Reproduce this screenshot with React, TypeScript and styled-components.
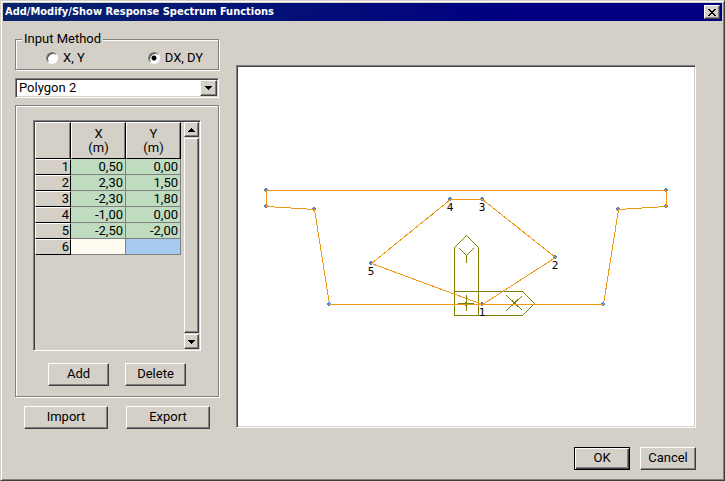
import React, { useState } from "react";
import styled, { createGlobalStyle, css } from "styled-components";

const face = "#d4d0c8";
const ui = `Roboto, "Liberation Sans", sans-serif`;

const GlobalStyle = createGlobalStyle`
  *, *::before, *::after { box-sizing: border-box; }
  body { margin: 0; background: ${face}; }
`;

const raised = css`
  border: 1px solid;
  border-color: #fff #404040 #404040 #fff;
  box-shadow: inset -1px -1px 0 #808080;
`;
const sunken = css`
  border: 1px solid;
  border-color: #808080 #fff #fff #808080;
`;
const etched = css`
  border: 1px solid #808080;
  box-shadow: inset 1px 1px 0 #fff, 1px 1px 0 #fff;
`;

const Dialog = styled.main`
  display: flex;
  flex-direction: column;
  min-height: 100vh;
  padding: 1px;
  background: ${face};
  border: 1px solid;
  border-color: ${face} #404040 #404040 ${face};
  box-shadow: inset 1px 1px 0 #fff, inset -1px -1px 0 #808080;
  font: 13px/16px ${ui};
  color: #000;
`;
const TitleBar = styled.header`
  display: flex;
  align-items: center;
  justify-content: space-between;
  height: 18px;
  margin: 1px;
  padding: 0 2px;
  background: linear-gradient(90deg, #08246b, #000080 70%);
`;
const Title = styled.h1`
  margin: 0;
  color: #fff;
  font: bold 11px/16px "DejaVu Sans Condensed", "DejaVu Sans", sans-serif;
`;
const CloseButton = styled.button`
  display: grid;
  place-items: center;
  width: 16px;
  height: 14px;
  padding: 0;
  background: ${face};
  ${raised}
`;
const Body = styled.div`
  display: flex;
  align-items: flex-start;
  gap: 17px;
  padding: 9px 27px 0 13px;
`;
const Side = styled.section`
  flex: none;
  width: 204px;
`;
const MethodGroup = styled.fieldset`
  position: relative;
  display: flex;
  gap: 63px;
  height: 39px;
  margin: 0 0 8px;
  padding: 19px 0 0 31px;
  border: 0;
  &::before {
    content: "";
    position: absolute;
    inset: 8px 0 0;
    ${etched}
  }
`;
const Legend = styled.legend`
  position: absolute;
  top: 0;
  left: 7px;
  padding: 0 2px;
  background: ${face};
`;
const RadioLabel = styled.label`
  position: relative;
  display: flex;
  align-items: center;
  gap: 5px;
  height: 16px;
`;
const Radio = styled.input`
  appearance: none;
  width: 12px;
  height: 12px;
  margin: 0;
  border: 1px solid;
  border-color: #808080 #fff #fff #808080;
  border-radius: 50%;
  background: #fff;
  box-shadow: inset 1px 1px 0 #404040;
  &:checked {
    background: radial-gradient(circle, #000 0 2px, #fff 3px);
  }
`;
const Combo = styled.div`
  display: grid;
  grid-template-columns: 1fr 17px;
  height: 20px;
  margin-bottom: 7px;
  padding: 1px;
  background: #fff;
  ${sunken}
  box-shadow: inset 1px 1px 0 #404040, inset -1px -1px 0 ${face};
`;
const Select = styled.select`
  grid-area: 1 / 1 / 2 / 3;
  appearance: none;
  width: 100%;
  padding: 0 20px 0 2px;
  border: 0;
  background: transparent;
  color: #000;
  font: 13px/16px ${ui};
`;
const ComboArrow = styled.span`
  grid-area: 1 / 2;
  display: grid;
  place-items: center;
  background: ${face};
  pointer-events: none;
  ${raised}
`;
const Panel = styled.div`
  height: 292px;
  margin: 0 0 9px;
  padding: 14px 17px 0;
  ${etched}
`;
const GridBox = styled.div`
  display: flex;
  justify-content: space-between;
  height: 231px;
  padding: 1px;
  ${sunken}
  box-shadow: inset 1px 1px 0 #404040;
`;
const Table = styled.table`
  align-self: flex-start;
  width: 146px;
  table-layout: fixed;
  border-collapse: separate;
  border-spacing: 0;
`;
const HeadCell = styled.th<{ $w: number }>`
  width: ${(p) => p.$w}px;
  height: 37px;
  padding: 1px 0 0;
  border: 1px solid;
  border-color: #fff #000 #000 #fff;
  box-shadow: inset -1px 0 0 #808080;
  font: 13px/14px ${ui};
`;
const RowHead = styled.th`
  height: 16px;
  padding: 0 1px 0 0;
  border: 1px solid;
  border-color: #fff #000 #000 #fff;
  font: 13px/14px ${ui};
  text-align: right;
`;
const Cell = styled.td<{ $tone: string }>`
  height: 16px;
  padding: 0 2px 0 0;
  border: 0 solid #808080;
  border-width: 0 1px 1px 0;
  background: ${(p) => p.$tone};
  font: 13px/15px ${ui};
  text-align: right;
`;
const ScrollBar = styled.div`
  display: grid;
  grid-template-rows: 15px 1fr 15px;
  gap: 1px;
  width: 15px;
`;
const ScrollButton = styled.button`
  display: grid;
  place-items: center;
  padding: 0;
  background: ${face};
  ${raised}
`;
const Thumb = styled.div`
  ${raised}
`;
const ButtonRow = styled.div<{ $gap: number; $top?: number }>`
  display: flex;
  justify-content: center;
  gap: ${(p) => p.$gap}px;
  margin-top: ${(p) => p.$top ?? 0}px;
`;
const Button = styled.button<{ $w: number; $default?: boolean }>`
  width: ${(p) => p.$w}px;
  height: 23px;
  padding: 0 0 2px;
  background: ${face};
  color: #000;
  font: 13px/16px ${ui};
  ${raised}
  ${(p) =>
    p.$default &&
    css`
      border-color: #000;
      box-shadow: inset 1px 1px 0 #fff, inset -1px -1px 0 #404040, inset -2px -2px 0 #808080;
    `}
`;
const Canvas = styled.section`
  flex: 1;
  min-width: 0;
  margin-top: 34px;
  padding: 1px;
  background: #fff;
  ${sunken}
  box-shadow: inset 1px 1px 0 #404040, inset -1px -1px 0 ${face};
  svg { display: block; width: 100%; height: auto; }
  text { font: 11px "DejaVu Sans Mono", monospace; }
`;
const Footer = styled.footer`
  display: flex;
  justify-content: flex-end;
  gap: 10px;
  padding: 18px 27px 0 0;
`;

const rows = [
  ["0,50", "0,00"],
  ["2,30", "1,50"],
  ["-2,30", "1,80"],
  ["-1,00", "0,00"],
  ["-2,50", "-2,00"],
];

const outline = [[266, 190], [666, 190], [666, 206], [618, 209], [603, 304], [329, 304], [314, 209], [266, 206]];
const polygon = [[482, 304], [555, 257], [482, 199], [450, 199], [371, 263]];
const toPath = (pts: number[][]) => "M" + pts.map(([x, y]) => `${x + 0.5} ${y + 0.5}`).join("L") + "Z";

const Arrow = ({ up }: { up?: boolean }) => (
  <svg width="7" height="4" shapeRendering="crispEdges" aria-hidden="true">
    <path d={up ? "M3 0h1v1h1v1h1v1h1v1H0V3h1V2h1V1h1z" : "M0 0h7v1H6v1H5v1H4v1H3V3H2V2H1V1H0z"} />
  </svg>
);

const Drawing = () => (
  <svg viewBox="238 67 456 359" shapeRendering="crispEdges" role="img" aria-label="Section polygon">
    <g fill="none" stroke="#808000" strokeLinejoin="bevel">
      <path d="M454.5 315.5V247.5L466.5 235.5L478.5 247.5V315.5" />
      <path d="M454.5 291.5H522.5L534.5 303.5L522.5 315.5H454.5" />
      <path d="M459.5 248.5L466.5 255.5L473.5 248.5M466.5 255.5V263" />
      <path d="M506.5 295.5L522.5 310.5M522.5 295.5L506.5 310.5" />
    </g>
    <g fill="#5080d0">
      {[...outline, ...polygon, [466, 304]].map(([x, y], i) => (
        <path key={i} d={`M${x - 1} ${y - 2}h2v1h1v2h-1v1h-2v-1h-1v-2h1z`} />
      ))}
    </g>
    <g fill="none" stroke="#f09818">
      <path d={toPath(outline)} />
      <path d={toPath(polygon)} />
    </g>
    <path d="M458 303.5H474M466.5 295V311" stroke="#808000" />
    <g textAnchor="middle">
      {polygon.map(([x, y], i) => (
        <text key={i} x={x} y={y + 12}>{i + 1}</text>
      ))}
    </g>
  </svg>
);

export default function App() {
  const [method, setMethod] = useState("dxdy");
  return (
    <>
      <GlobalStyle />
      <Dialog>
        <TitleBar>
          <Title>Add/Modify/Show Response Spectrum Functions</Title>
          <CloseButton aria-label="Close">
            <svg width="8" height="7" shapeRendering="crispEdges">
              <path d="M0 0h2v1h1v1h2V1h1V0h2v1H7v1H6v1H5v1h1v1h1v1h1v1H6V6H5V5H3v1H2v1H0V6h1V5h1V4h1V3H2V2H1V1H0z" />
            </svg>
          </CloseButton>
        </TitleBar>
        <Body>
          <Side>
            <MethodGroup>
              <Legend>Input Method</Legend>
              <RadioLabel>
                <Radio type="radio" name="method" checked={method === "xy"} onChange={() => setMethod("xy")} />
                X, Y
              </RadioLabel>
              <RadioLabel>
                <Radio type="radio" name="method" checked={method === "dxdy"} onChange={() => setMethod("dxdy")} />
                DX, DY
              </RadioLabel>
            </MethodGroup>
            <Combo>
              <Select aria-label="Polygon" defaultValue="Polygon 2">
                <option>Polygon 1</option>
                <option>Polygon 2</option>
              </Select>
              <ComboArrow><Arrow /></ComboArrow>
            </Combo>
            <Panel>
              <GridBox>
                <Table>
                  <thead>
                    <tr>
                      <HeadCell $w={36} />
                      <HeadCell $w={55}>X<br />(m)</HeadCell>
                      <HeadCell $w={55}>Y<br />(m)</HeadCell>
                    </tr>
                  </thead>
                  <tbody>
                    {rows.map(([x, y], i) => (
                      <tr key={i}>
                        <RowHead>{i + 1}</RowHead>
                        <Cell $tone="#c0dcc0">{x}</Cell>
                        <Cell $tone="#c0dcc0">{y}</Cell>
                      </tr>
                    ))}
                    <tr>
                      <RowHead>6</RowHead>
                      <Cell $tone="#fffbf0" />
                      <Cell $tone="#a6caf0" />
                    </tr>
                  </tbody>
                </Table>
                <ScrollBar>
                  <ScrollButton aria-label="Scroll up"><Arrow up /></ScrollButton>
                  <Thumb />
                  <ScrollButton aria-label="Scroll down"><Arrow /></ScrollButton>
                </ScrollBar>
              </GridBox>
              <ButtonRow $gap={16} $top={12}>
                <Button $w={61}>Add</Button>
                <Button $w={61}>Delete</Button>
              </ButtonRow>
            </Panel>
            <ButtonRow $gap={18}>
              <Button $w={84}>Import</Button>
              <Button $w={84}>Export</Button>
            </ButtonRow>
          </Side>
          <Canvas><Drawing /></Canvas>
        </Body>
        <Footer>
          <Button $w={56} $default>OK</Button>
          <Button $w={56}>Cancel</Button>
        </Footer>
      </Dialog>
    </>
  );
}
